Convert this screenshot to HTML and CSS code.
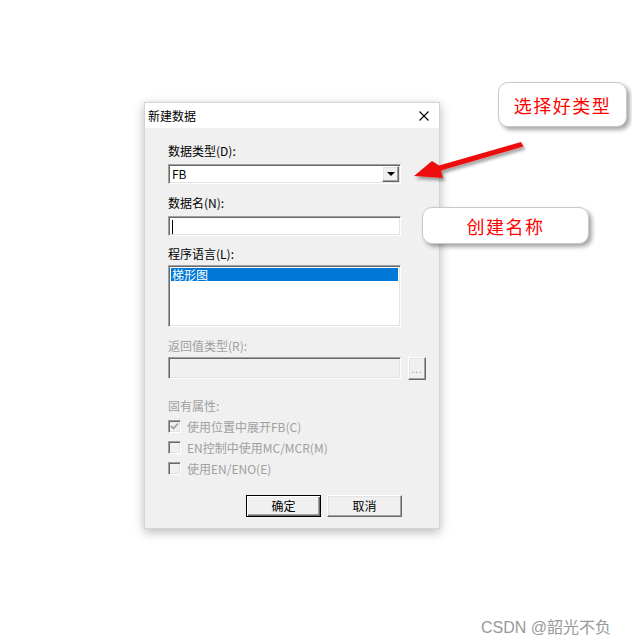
FILE: index.html
```html
<!DOCTYPE html>
<html lang="zh-CN">
<head>
    <meta charset="UTF-8">
    <meta name="viewport" content="width=device-width, initial-scale=1.0">
    <title>新建数据</title>
    <link rel="stylesheet" href="styles.css">
</head>
<body>

  <div class="dialog">
    <div class="titlebar">
      <span class="title">新建数据</span>
      <svg class="close" width="10" height="10" viewBox="0 0 10 10">
        <path d="M0.5 0.5 L9.5 9.5 M9.5 0.5 L0.5 9.5" stroke="#000" stroke-width="1.1"/>
      </svg>
    </div>

    <div class="content">
      <div class="label lbl-type">数据类型(<u>D</u>):</div>
      <div class="combo sunken">
        <span class="combo-text">FB</span>
        <span class="drop raised"><i class="tri"></i></span>
      </div>

      <div class="label lbl-name">数据名(<u>N</u>):</div>
      <div class="edit sunken"><i class="caret"></i></div>

      <div class="label lbl-lang">程序语言(<u>L</u>):</div>
      <div class="listbox sunken">
        <div class="item selected">梯形图</div>
      </div>

      <div class="label disabled lbl-ret">返回值类型(R):</div>
      <div class="ret-row">
        <div class="edit grey sunken"></div>
        <div class="dots raised">...</div>
      </div>

      <div class="label disabled lbl-attr">固有属性:</div>
      <div class="checks">
        <div class="check"><span class="box sunken checked">
          <svg width="9" height="9" viewBox="0 0 9 9"><path d="M1 4 L3.5 6.5 L8 1.5" fill="none" stroke="#a0a0a0" stroke-width="1.8"/></svg>
        </span>使用位置中展开FB(C)</div>
        <div class="check"><span class="box sunken"></span>EN控制中使用MC/MCR(M)</div>
        <div class="check"><span class="box sunken"></span>使用EN/ENO(E)</div>
      </div>

      <div class="buttons">
        <div class="btn default">确定</div>
        <div class="btn raised">取消</div>
      </div>
    </div>
  </div>

  <div class="callout callout-type">选择好类型</div>
  <div class="callout callout-name">创建名称</div>

  <svg class="arrow" width="632" height="644" viewBox="0 0 632 644">
    <defs>
      <filter id="sh" x="-20%" y="-50%" width="140%" height="200%">
        <feDropShadow dx="2" dy="3" stdDeviation="1.6" flood-color="#000" flood-opacity="0.35"/>
      </filter>
    </defs>
    <polygon filter="url(#sh)" fill="#ee1111"
      points="521,142 523.5,146.5 441,170.5 443,178 414,176 432,161 439,165.5"/>
  </svg>

  <div class="watermark">CSDN @韶光不负</div>

</body>
</html>
```

FILE: styles.css
```css
* {
  box-sizing: border-box;
}

html {
  background: #fff;
}

body {
  margin: 0;
  width: 632px;
  height: 644px;
  overflow: hidden;
  font-family: "Noto Sans CJK SC", "DejaVu Sans", sans-serif;
  font-size: 12px;
  color: #000;
}

u {
  text-decoration: none;
}

/* 3D borders, classic windows look */
.sunken {
  border: 1px solid;
  border-color: #a0a0a0 #fff #fff #a0a0a0;
  box-shadow: inset 1px 1px 0 #696969, inset -1px -1px 0 #e3e3e3;
}

.raised {
  border: 1px solid;
  border-color: #fff #696969 #696969 #fff;
  box-shadow: inset -1px -1px 0 #a0a0a0, inset 1px 1px 0 #e3e3e3;
}

.dialog {
  margin: 102px 0 0 144px;
  width: 296px;
  height: 427px;
  background: #f0f0f0;
  border: 1px solid #d4d4d4;
  box-shadow: 0 3px 10px rgba(0, 0, 0, 0.28);
  display: flex;
  flex-direction: column;
}

.titlebar {
  height: 25px;
  background: #fff;
  display: flex;
  align-items: center;
  justify-content: space-between;
  padding: 0 10px 0 3px;
  flex-shrink: 0;
}

.title {
  line-height: 16px;
}

.content {
  padding: 15px 0 0 23px;
  display: flex;
  flex-direction: column;
}

.label {
  line-height: 16px;
  height: 16px;
}

.disabled {
  color: #a0a0a0;
}

.lbl-name { margin-top: 11px; }
.lbl-lang { margin-top: 10px; }
.lbl-ret { margin-top: 11px; }
.lbl-attr { margin-top: 18px; }

.combo {
  margin-top: 5px;
  width: 233px;
  height: 20px;
  background: #fff;
  display: flex;
  align-items: center;
  justify-content: space-between;
  padding: 2px 1px 2px 3px;
}

.combo-text {
  line-height: 14px;
}

.drop {
  width: 17px;
  height: 16px;
  background: #f0f0f0;
  display: flex;
  align-items: center;
  justify-content: center;
}

.tri {
  width: 0;
  height: 0;
  border-left: 4px solid transparent;
  border-right: 4px solid transparent;
  border-top: 4px solid #000;
}

.edit {
  margin-top: 5px;
  width: 233px;
  height: 20px;
  background: #fff;
  padding: 3px 0 0 3px;
}

.caret {
  display: block;
  width: 1px;
  height: 14px;
  background: #000;
}

.listbox {
  margin-top: 3px;
  width: 233px;
  height: 62px;
  background: #fff;
  padding: 2px;
}

.item {
  height: 13px;
  line-height: 13px;
  padding-left: 1px;
}

.selected {
  background: #0078d7;
  color: #fff;
}

.ret-row {
  margin-top: 3px;
  display: flex;
  gap: 7px;
  align-items: flex-start;
}

.ret-row .edit {
  margin-top: 0;
  height: 22px;
}

.edit.grey {
  background: #f0f0f0;
}

.dots {
  width: 18px;
  height: 23px;
  background: #f0f0f0;
  color: #909090;
  font-size: 10px;
  line-height: 22px;
  text-align: center;
  letter-spacing: 1px;
}

.checks {
  margin-top: 2px;
  display: flex;
  flex-direction: column;
  color: #a0a0a0;
}

.check {
  height: 21px;
  display: flex;
  align-items: center;
  gap: 6px;
}

.box {
  width: 13px;
  height: 13px;
  background: #f0f0f0;
  display: flex;
  align-items: center;
  justify-content: center;
}

.buttons {
  margin-top: 16px;
  display: flex;
  gap: 6px;
  padding-left: 78px;
}

.btn {
  width: 75px;
  height: 22px;
  background: #f0f0f0;
  line-height: 20px;
  text-align: center;
}

.btn.default {
  border: 1px solid #000;
  box-shadow: inset 1px 1px 0 #fff, inset -1px -1px 0 #696969, inset -2px -2px 0 #a0a0a0;
}

.callout {
  position: absolute;
  background: #fff;
  border: 1px solid #c8c8c8;
  border-radius: 10px;
  box-shadow: 3px 3px 4px rgba(0, 0, 0, 0.35);
  color: #ff0000;
  font-size: 18px;
  letter-spacing: 1.5px;
  display: flex;
  align-items: center;
  justify-content: center;
}

.callout-type {
  left: 498px;
  top: 82px;
  width: 129px;
  height: 45px;
}

.callout-name {
  left: 422px;
  top: 207px;
  width: 167px;
  height: 37px;
}

.arrow {
  position: absolute;
  left: 0;
  top: 0;
  pointer-events: none;
}

.watermark {
  position: absolute;
  left: 481px;
  top: 614px;
  color: #999;
  font-size: 16px;
  font-family: "Liberation Sans", "Noto Sans CJK SC", sans-serif;
}
```
